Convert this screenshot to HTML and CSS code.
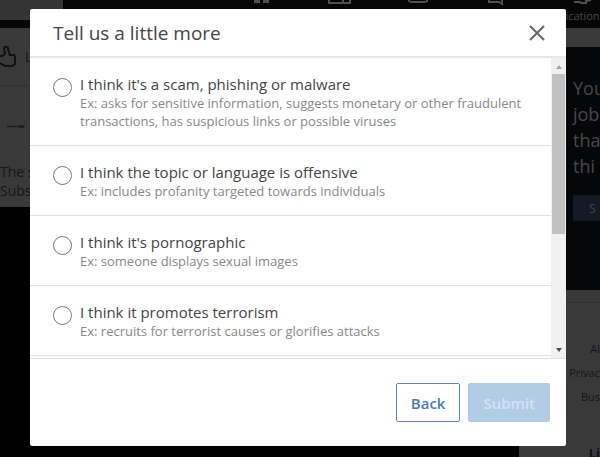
FILE: index.html
```html
<!DOCTYPE html>
<html lang="en">
<head>
    <meta charset="UTF-8">
    <meta name="viewport" content="width=device-width, initial-scale=1.0">
    <title>Tell us a little more</title>
    <link rel="stylesheet" href="styles.css">
</head>
<body>
    <div class="page">
        <nav class="nav">
            <div class="nav-search"></div>
            <div class="nav-icons">
                <svg width="18" height="6" viewBox="0 0 18 6"><path d="M1 0h6v3H1zM10 0h6v3h-6z" fill="#505050"/></svg>
                <svg width="24" height="6" viewBox="0 0 24 6"><path d="M1 0v3h21V0M15 0v3" fill="none" stroke="#505050" stroke-width="2"/></svg>
                <svg width="22" height="6" viewBox="0 0 22 6"><path d="M1 0v1l2 1h14l2-1V0" fill="none" stroke="#505050" stroke-width="2"/></svg>
                <svg width="18" height="6" viewBox="0 0 18 6"><path d="M2 0v2h10l3 2V0" fill="none" stroke="#505050" stroke-width="2"/></svg>
            </div>
            <div class="nav-item">
                <svg width="18" height="6" viewBox="0 0 18 6"><path d="M0 2h6l1 1h5V1l5-1" fill="none" stroke="#505050" stroke-width="2"/></svg>
                <span>ication</span>
            </div>
        </nav>
        <div class="columns">
            <div class="feed">
                <div class="feed-actions">
                    <svg width="18" height="24" viewBox="0 0 18 24"><path d="M0 11h2c2-1 3-2 3-3L4 4c0-3 4-3 4 0l2 6h4l1 2v7l-3 2H5l-5-3" fill="none" stroke="#111" stroke-width="2"/></svg>
                    <span>L</span>
                </div>
                <svg class="feed-mark" width="18" height="4" viewBox="0 0 18 4"><path d="M0 1l2 1 2-1 2 1 2-1 2 1M11 1h6v1h-6" fill="none" stroke="#111"/></svg>
                <p class="feed-text">The s<br>Subs</p>
            </div>
            <aside class="aside">
                <div class="ad">
                    <p class="ad-text">You<br>job<br>tha<br>thi</p>
                    <button class="ad-button" type="button">S</button>
                </div>
                <div class="links">
                    <a href="#">Al</a>
                    <a href="#">Privac</a>
                    <a href="#">Bus</a>
                    <strong class="brand">Li</strong>
                </div>
            </aside>
        </div>
    </div>

    <form class="modal">
        <header class="modal-header">
            <h1 class="modal-title">Tell us a little more</h1>
            <button class="close" type="button" aria-label="Close">
                <svg width="16" height="16" viewBox="0 0 16 16"><path d="M1 1l14 14M15 1L1 15" fill="none" stroke="#666" stroke-width="2"/></svg>
            </button>
        </header>
        <div class="modal-body">
            <div class="options">
                <label class="option">
                    <input class="radio" type="radio" name="reason">
                    <span class="option-text">
                        <span class="option-title">I think it's a scam, phishing or malware</span>
                        <span class="option-hint">Ex: asks for sensitive information, suggests monetary or other fraudulent transactions, has suspicious links or possible viruses</span>
                    </span>
                </label>
                <label class="option">
                    <input class="radio" type="radio" name="reason">
                    <span class="option-text">
                        <span class="option-title">I think the topic or language is offensive</span>
                        <span class="option-hint">Ex: includes profanity targeted towards individuals</span>
                    </span>
                </label>
                <label class="option">
                    <input class="radio" type="radio" name="reason">
                    <span class="option-text">
                        <span class="option-title">I think it's pornographic</span>
                        <span class="option-hint">Ex: someone displays sexual images</span>
                    </span>
                </label>
                <label class="option">
                    <input class="radio" type="radio" name="reason">
                    <span class="option-text">
                        <span class="option-title">I think it promotes terrorism</span>
                        <span class="option-hint">Ex: recruits for terrorist causes or glorifies attacks</span>
                    </span>
                </label>
            </div>
            <div class="scrollbar">
                <svg width="6" height="4" viewBox="0 0 6 4"><path d="M3 0l3 4H0z" fill="#a3a3a3"/></svg>
                <div class="thumb"></div>
                <svg width="6" height="4" viewBox="0 0 6 4"><path d="M0 0h6L3 4z" fill="#505050"/></svg>
            </div>
        </div>
        <footer class="modal-footer">
            <button class="button button-back" type="button">Back</button>
            <button class="button button-submit" type="submit" disabled>Submit</button>
        </footer>
    </form>
</body>
</html>
```
FILE: styles.css
```css
* {
    box-sizing: border-box;
}

body {
    margin: 0;
    height: 100vh;
    background-color: #000;
    font-family: "Open Sans", "Noto Sans", sans-serif;
    overflow: hidden;
}

/* Dimmed page behind the dialog */
.page {
    display: flex;
    flex-direction: column;
    height: 100vh;
    overflow: hidden;
}

.nav {
    display: flex;
    height: 28px;
    flex-shrink: 0;
    background-color: #060606;
}

.nav-search {
    width: 63px;
    height: 20px;
    background-color: #343434;
}

.nav-icons {
    display: flex;
    flex: 1;
    justify-content: space-between;
    padding: 0 20px 0 190px;
}

.nav-item {
    display: flex;
    flex-direction: column;
    align-items: center;
    width: 75px;
    padding-left: 40px;
    font-size: 11px;
    line-height: 20px;
    color: #484848;
}

.columns {
    display: flex;
    flex: 1;
    justify-content: space-between;
    min-height: 0;
}

.feed {
    width: 100px;
    height: 179px;
    background-color: #393939;
    font-size: 14px;
    color: #161616;
}

.feed-actions {
    display: flex;
    align-items: center;
    gap: 7px;
    height: 58px;
    border-bottom: 1px solid #303030;
}

.feed-mark {
    display: block;
    margin: 39px 0 0 7px;
}

.feed-text {
    margin: 33px 0 0;
    line-height: 19px;
    white-space: nowrap;
}

.aside {
    width: 81px;
    padding-top: 19px;
    background-color: #393939;
}

.ad {
    height: 243px;
    padding: 28px 0 0 54px;
    background-color: #060708;
}

.ad-text {
    margin: 0 0 16px;
    font-size: 18px;
    line-height: 26px;
    color: #484848;
}

.ad-button {
    width: 100%;
    height: 26px;
    border: 0;
    border-radius: 2px 0 0 2px;
    background-color: #141b24;
    font: 12px "Open Sans", "Noto Sans", sans-serif;
    padding-left: 16px;
    color: #444;
}

.links {
    display: flex;
    flex-direction: column;
    align-items: flex-end;
    margin-top: 12px;
    padding-top: 34px;
    border-top: 1px solid #303030;
    font-size: 11px;
    line-height: 24px;
    color: #111;
}

.links a {
    color: #161616;
    text-decoration: none;
}

.brand {
    margin-top: 32px;
    font-size: 13px;
}

/* Dialog */
.modal {
    position: absolute;
    top: 9px;
    left: 30px;
    right: 34px;
    background-color: #fff;
    border-radius: 2px;
    color: #444;
}

.modal-header {
    display: flex;
    align-items: center;
    justify-content: space-between;
    height: 49px;
    padding: 0 21px 0 23px;
    border-bottom: 2px solid #e8e8e8;
}

.modal-title {
    margin: 0;
    font-size: 19px;
    font-weight: 400;
    line-height: 24px;
}

.close {
    display: flex;
    padding: 0;
    border: 0;
    background: none;
}

.modal-body {
    display: flex;
    border-bottom: 1px solid #e0e0e0;
}

.options {
    flex: 1;
    padding-bottom: 2px;
}

.option {
    display: flex;
    gap: 8px;
    padding: 17px 24px 15px 23px;
    border-bottom: 1px solid #e0e0e0;
}

.radio {
    appearance: none;
    flex-shrink: 0;
    width: 19px;
    height: 19px;
    margin: 3px 0 0;
    border: 1px solid #777;
    border-radius: 50%;
    background-color: #fff;
}

.option-title,
.option-hint {
    display: block;
}

.option-title {
    font-size: 15px;
    line-height: 19px;
}

.option-hint {
    font-size: 13px;
    line-height: 18px;
    color: #888;
}

.scrollbar {
    display: flex;
    flex-direction: column;
    align-items: center;
    width: 15px;
    padding: 7px 0 6px;
    background-color: #f0f0f0;
}

.thumb {
    width: 13px;
    height: 160px;
    margin: 5px 0 auto;
    background-color: #c1c1c1;
}

.modal-footer {
    display: flex;
    justify-content: flex-end;
    gap: 8px;
    padding: 24px 16px;
}

.button {
    height: 39px;
    border: 1px solid #5b89ba;
    border-radius: 2px;
    padding: 0 14px;
    font-family: "Open Sans", "Noto Sans", sans-serif;
    font-size: 15px;
    font-weight: 600;
}

.button-back {
    background-color: #fff;
    color: #4a7db5;
}

.button-submit {
    border-color: #b3cce6;
    background-color: #b3cce6;
    color: #d3e2f2;
}
```
